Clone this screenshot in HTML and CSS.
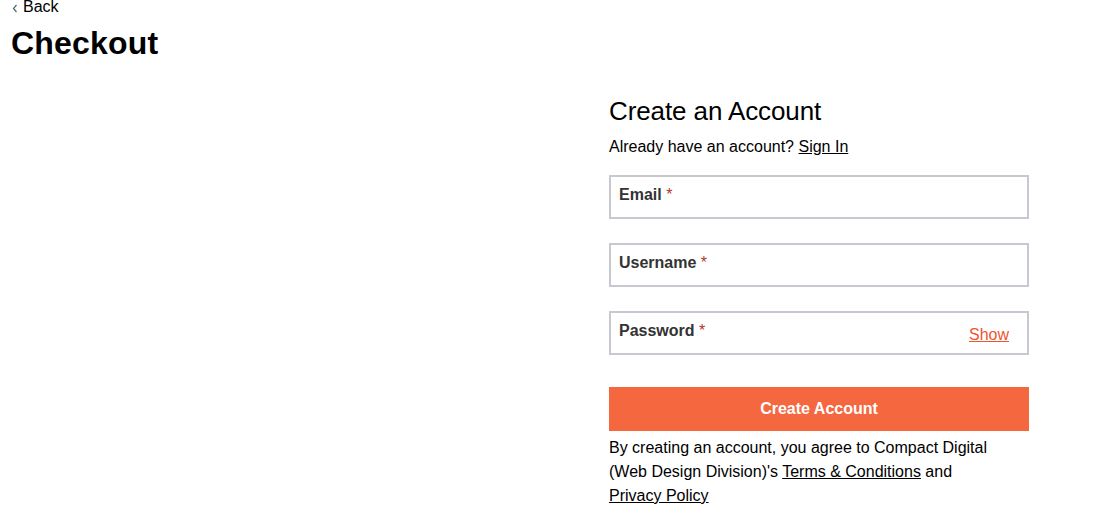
FILE: index.html
```html
<!DOCTYPE html>
<html lang="en">
<head>
<meta charset="utf-8">
<title>Checkout</title>
<link rel="stylesheet" href="styles.css">
</head>
<body>
<div class="page">
  <a class="back" href="#">
    <svg class="back-icon" width="6" height="9" viewBox="0 0 6 9" aria-hidden="true"><path d="M4.5 1 L1.5 4.5 L4.5 8" fill="none" stroke="#4d6873" stroke-width="1.2"/></svg>
    <span>Back</span>
  </a>
  <h1 class="title">Checkout</h1>
  <div class="checkout-grid">
    <div class="left-col"></div>
    <div class="account">
      <h2 class="account-title">Create an Account</h2>
      <p class="signin">Already have an account? <a href="#" class="link">Sign In</a></p>
      <div class="field"><label class="field-label">Email <span class="req">*</span></label></div>
      <div class="field"><label class="field-label">Username <span class="req">*</span></label></div>
      <div class="field field-password"><label class="field-label">Password <span class="req">*</span></label><a href="#" class="show">Show</a></div>
      <button class="submit" type="button">Create Account</button>
      <p class="terms">By creating an account, you agree to Compact Digital (Web Design Division)'s <a href="#" class="link">Terms &amp; Conditions</a> and <a href="#" class="link">Privacy Policy</a></p>
    </div>
  </div>
</div>
</body>
</html>
```
FILE: styles.css
```css
html, body {
  margin: 0;
  padding: 0;
  background: #fff;
}
body {
  font-family: "Liberation Sans", Arial, sans-serif;
  color: #000;
  font-size: 16px;
}
.page {
  padding-left: 11px;
}
.back {
  display: flex;
  align-items: center;
  gap: 5px;
  height: 14px;
  line-height: 14px;
  color: #000;
  text-decoration: none;
  font-size: 16px;
  padding-left: 1px;
}
.back-icon {
  display: block;
  margin-top: 2px;
}
.title {
  margin: 11px 0 0;
  font-size: 32px;
  line-height: 37px;
  font-weight: 700;
  letter-spacing: 0.2px;
}
.checkout-grid {
  display: grid;
  grid-template-columns: 598px 420px;
  margin-top: 34px;
}
.account-title {
  margin: 0;
  font-size: 26px;
  line-height: 30px;
  font-weight: 400;
  letter-spacing: -0.1px;
}
.signin {
  margin: 12px 0 0;
  line-height: 18px;
}
.link {
  color: #000;
  text-decoration: underline;
  white-space: nowrap;
}
.field {
  box-sizing: border-box;
  height: 44px;
  border: 2px solid #c8c8d0;
  padding: 9px 18px 0 8px;
  margin-top: 24px;
  display: flex;
  justify-content: space-between;
  align-items: flex-start;
}
.signin + .field {
  margin-top: 19px;
}
.field-label {
  font-weight: 700;
  line-height: 18px;
  color: #333;
}
.req {
  color: #b03a2e;
  font-weight: 400;
}
.show {
  color: #f0532e;
  text-decoration: underline;
  line-height: 18px;
  margin-top: 4px;
}
.submit {
  display: block;
  box-sizing: border-box;
  width: 100%;
  height: 44px;
  margin-top: 32px;
  padding: 0;
  border: 0;
  background: #f5673f;
  color: #fff;
  font-family: "Liberation Sans", Arial, sans-serif;
  font-size: 16px;
  font-weight: 700;
  line-height: 18px;
}
.terms {
  margin: 5px 0 0;
  line-height: 24px;
}
```
